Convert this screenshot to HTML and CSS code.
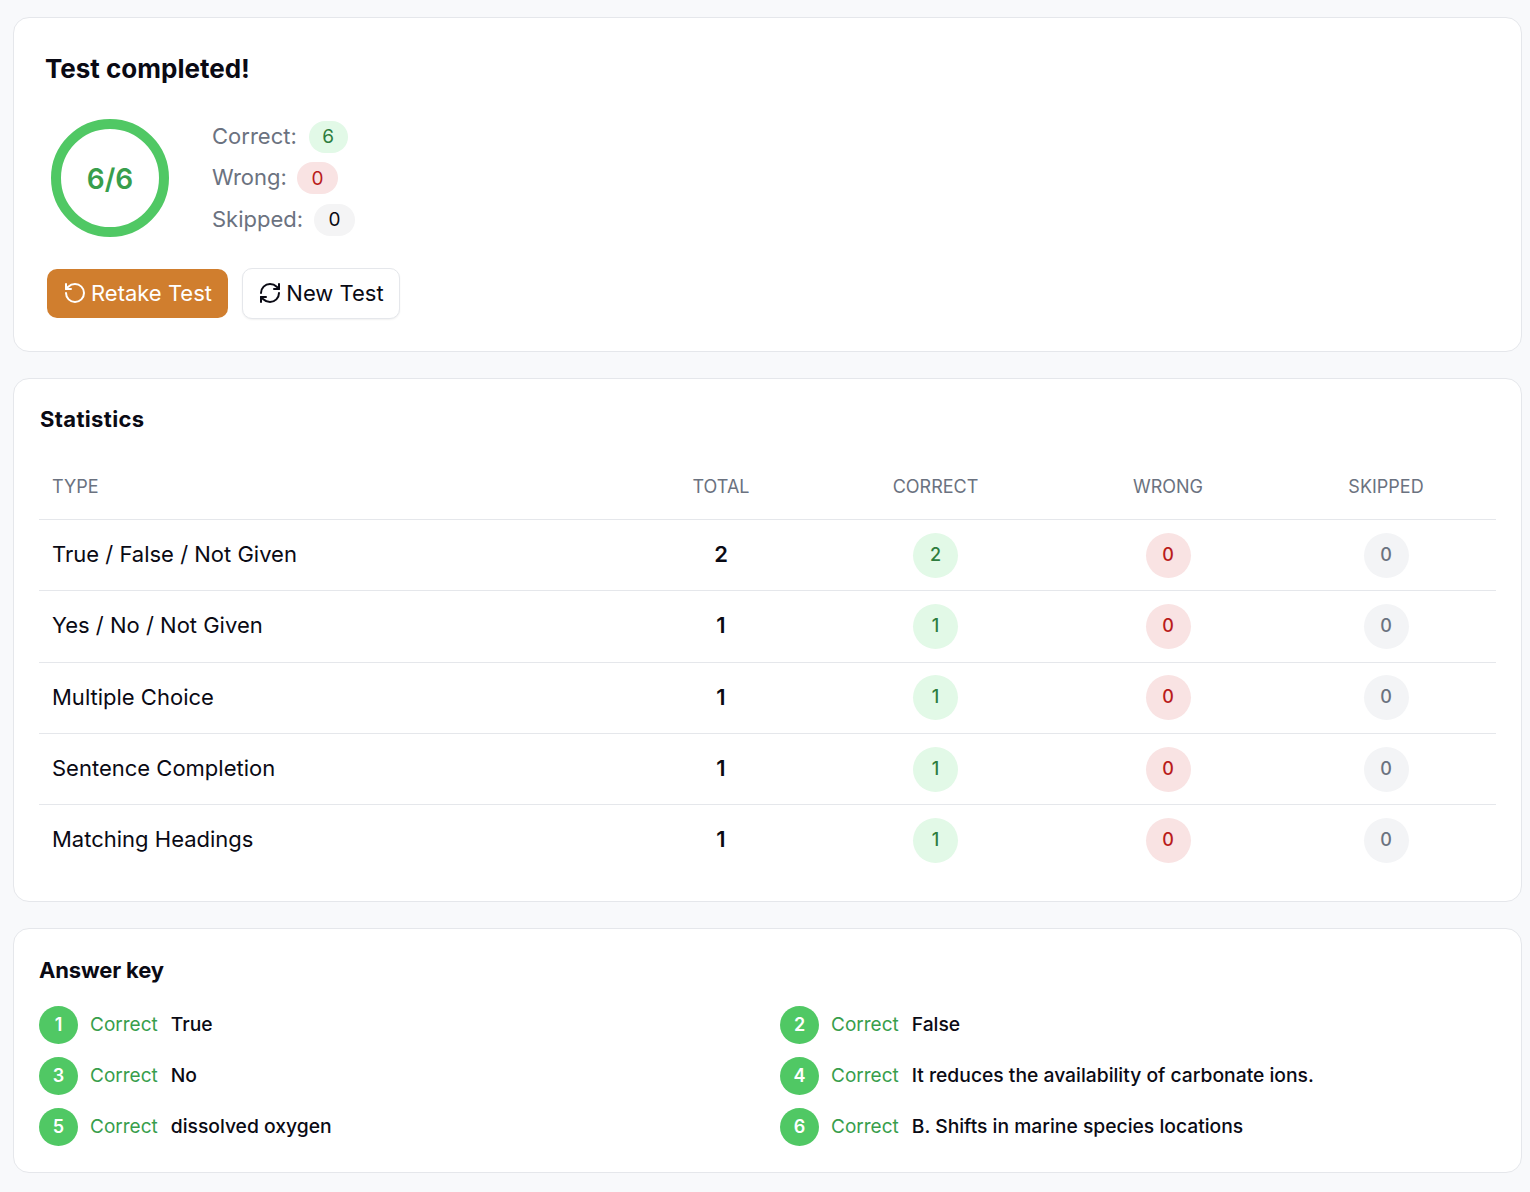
FILE: index.html
```html
<!DOCTYPE html>
<html lang="en">
<head>
<meta charset="utf-8">
<title>Test result</title>
<link rel="stylesheet" href="styles.css">
</head>
<body>
<main class="page">
  <section class="card summary">
    <h1 class="summary-title">Test completed!</h1>
    <div class="score">
      <div class="ring"><span>6/6</span></div>
      <ul class="counts">
        <li><span>Correct:</span><b class="chip green">6</b></li>
        <li class="tight"><span>Wrong:</span><b class="chip red">0</b></li>
        <li class="snug"><span>Skipped:</span><b class="chip grey">0</b></li>
      </ul>
    </div>
    <div class="actions">
      <button class="btn btn-primary">
        <svg viewBox="0 0 24 24" class="icon"><path d="M3 12a9 9 0 1 0 9-9 9.75 9.75 0 0 0-6.74 2.74L3 8"/><path d="M3 3v5h5"/></svg>
        Retake Test
      </button>
      <button class="btn btn-outline">
        <svg viewBox="0 0 24 24" class="icon"><path d="M3 12a9 9 0 0 1 9-9 9.75 9.75 0 0 1 6.74 2.74L21 8"/><path d="M21 3v5h-5"/><path d="M21 12a9 9 0 0 1-9 9 9.75 9.75 0 0 1-6.74-2.74L3 16"/><path d="M8 16H3v5"/></svg>
        New Test
      </button>
    </div>
  </section>

  <section class="card stats">
    <h2 class="card-title stats-title">Statistics</h2>
    <div class="table">
      <div class="row head"><div class="cell type">TYPE</div><div class="cell">TOTAL</div><div class="cell">CORRECT</div><div class="cell">WRONG</div><div class="cell">SKIPPED</div></div>
      <div class="row"><div class="cell type">True / False / Not Given</div><div class="cell total">2</div><div class="cell"><b class="dot green">2</b></div><div class="cell"><b class="dot red">0</b></div><div class="cell"><b class="dot muted">0</b></div></div>
      <div class="row"><div class="cell type">Yes / No / Not Given</div><div class="cell total">1</div><div class="cell"><b class="dot green">1</b></div><div class="cell"><b class="dot red">0</b></div><div class="cell"><b class="dot muted">0</b></div></div>
      <div class="row"><div class="cell type">Multiple Choice</div><div class="cell total">1</div><div class="cell"><b class="dot green">1</b></div><div class="cell"><b class="dot red">0</b></div><div class="cell"><b class="dot muted">0</b></div></div>
      <div class="row"><div class="cell type">Sentence Completion</div><div class="cell total">1</div><div class="cell"><b class="dot green">1</b></div><div class="cell"><b class="dot red">0</b></div><div class="cell"><b class="dot muted">0</b></div></div>
      <div class="row"><div class="cell type">Matching Headings</div><div class="cell total">1</div><div class="cell"><b class="dot green">1</b></div><div class="cell"><b class="dot red">0</b></div><div class="cell"><b class="dot muted">0</b></div></div>
    </div>
  </section>

  <section class="card answers">
    <h2 class="card-title answers-title">Answer key</h2>
    <ol class="answer-grid">
      <li><span class="num">1</span><span class="verdict">Correct</span><span class="answer">True</span></li>
      <li><span class="num">2</span><span class="verdict">Correct</span><span class="answer">False</span></li>
      <li><span class="num">3</span><span class="verdict">Correct</span><span class="answer">No</span></li>
      <li><span class="num">4</span><span class="verdict">Correct</span><span class="answer">It reduces the availability of carbonate ions.</span></li>
      <li><span class="num">5</span><span class="verdict">Correct</span><span class="answer">dissolved oxygen</span></li>
      <li><span class="num">6</span><span class="verdict">Correct</span><span class="answer">B. Shifts in marine species locations</span></li>
    </ol>
  </section>
</main>
</body>
</html>
```
FILE: styles.css
```css
* { box-sizing: border-box; }
html, body { margin: 0; }
body {
  background: #f8f9fb;
  color: #0a0a14;
  font-family: "Inter", "Liberation Sans", sans-serif;
}
.page {
  display: flex;
  flex-direction: column;
  gap: 26px;
  padding: 17px 8px 19px 13px;
}
.card {
  background: #fff;
  border: 1px solid #e5e7eb;
  border-radius: 16px;
}
.summary { height: 335px; padding: 32px 32px 0 31px; }
.summary-title { margin: 0; font-size: 26px; line-height: 37px; font-weight: 700; }
.score { display: flex; align-items: center; gap: 43px; margin-top: 32px; padding-left: 6px; }
.ring {
  width: 118px; height: 118px;
  border: 10px solid #50c864;
  border-radius: 50%;
  display: flex; align-items: center; justify-content: center;
  color: #389e4c;
  font-size: 28px; font-weight: 600;
  padding-top: 1px;
}
.counts { list-style: none; margin: 0; padding: 0; display: flex; flex-direction: column; gap: 9.5px; color: #6b7280; font-size: 22px; }
.counts li { display: flex; align-items: center; gap: 12px; height: 32px; }
.counts li.tight { gap: 10px; }
.counts li.snug { gap: 11px; }
.counts li > span { padding-bottom: 2px; }
.chip { display: flex; align-items: center; justify-content: center; height: 32px; width: 41px; border-radius: 16px; font-weight: 400; font-size: 19px; }
.chip.green { width: 39px; }
.green { background: #e2f9e7; color: #2e7d3e; }
.red { background: #f9e3e3; color: #b91c1c; }
.grey { background: #f4f4f5; color: #0a0a14; }
.muted { background: #f3f4f6; color: #6b7280; }
.actions { display: flex; align-items: center; gap: 14px; margin-top: 31px; padding-left: 2px; }
.btn { display: inline-flex; align-items: center; justify-content: center; gap: 4px; font: inherit; font-size: 22px; border-radius: 10px; cursor: pointer; padding: 0 0 2px; }
.btn-primary { width: 181px; height: 49px; background: #d07e2e; color: #fff; border: 0; }
.btn-outline { width: 158px; height: 51px; background: #fff; color: #0a0a14; border: 1px solid #e5e7eb; box-shadow: 0 1px 2px rgba(0,0,0,.06); }
.icon { width: 24px; height: 24px; fill: none; stroke: currentColor; stroke-width: 2; stroke-linecap: round; stroke-linejoin: round; flex: none; }
.stats { height: 524px; padding: 25px 25px 0; }
.card-title { margin: 0; font-size: 22px; line-height: 30px; font-weight: 700; }
.stats-title { letter-spacing: 0.35px; padding-left: 1px; }
.answers-title { letter-spacing: -0.15px; }
.table { margin-top: 18px; }
.row { display: grid; grid-template-columns: 591px 182px 247px 218px 218px; align-items: center; height: 71.3px; border-top: 1px solid #e5e7eb; font-size: 22px; }
.row.head { height: 67px; border-top: 0; font-size: 18px; color: #6b7280; padding-top: 2px; }
.cell { display: flex; justify-content: center; align-items: center; }
.cell.type { justify-content: flex-start; padding-left: 13px; }
.row:not(.head) .type, .total { padding-bottom: 2px; }
.total { font-weight: 600; }
.dot { width: 45px; height: 45px; border-radius: 50%; display: flex; align-items: center; justify-content: center; font-size: 18px; font-weight: 500; padding-bottom: 2px; }
.answers { height: 245px; padding: 26px 25px 0; }
.answer-grid { list-style: none; margin: 21px 0 0; padding: 0; display: grid; grid-template-columns: 741px 1fr; row-gap: 13px; }
.answer-grid li { display: flex; align-items: center; height: 38px; font-size: 19px; }
.num { width: 39px; height: 38px; border-radius: 50%; background: #50c864; color: #fff; font-weight: 600; display: flex; align-items: center; justify-content: center; font-size: 18px; margin-right: 12px; padding-bottom: 2px; }
.verdict, .answer { padding-bottom: 2px; }
.verdict { color: #389e4c; margin-right: 13px; }
.answer { font-weight: 500; font-size: 19.3px; }
```
